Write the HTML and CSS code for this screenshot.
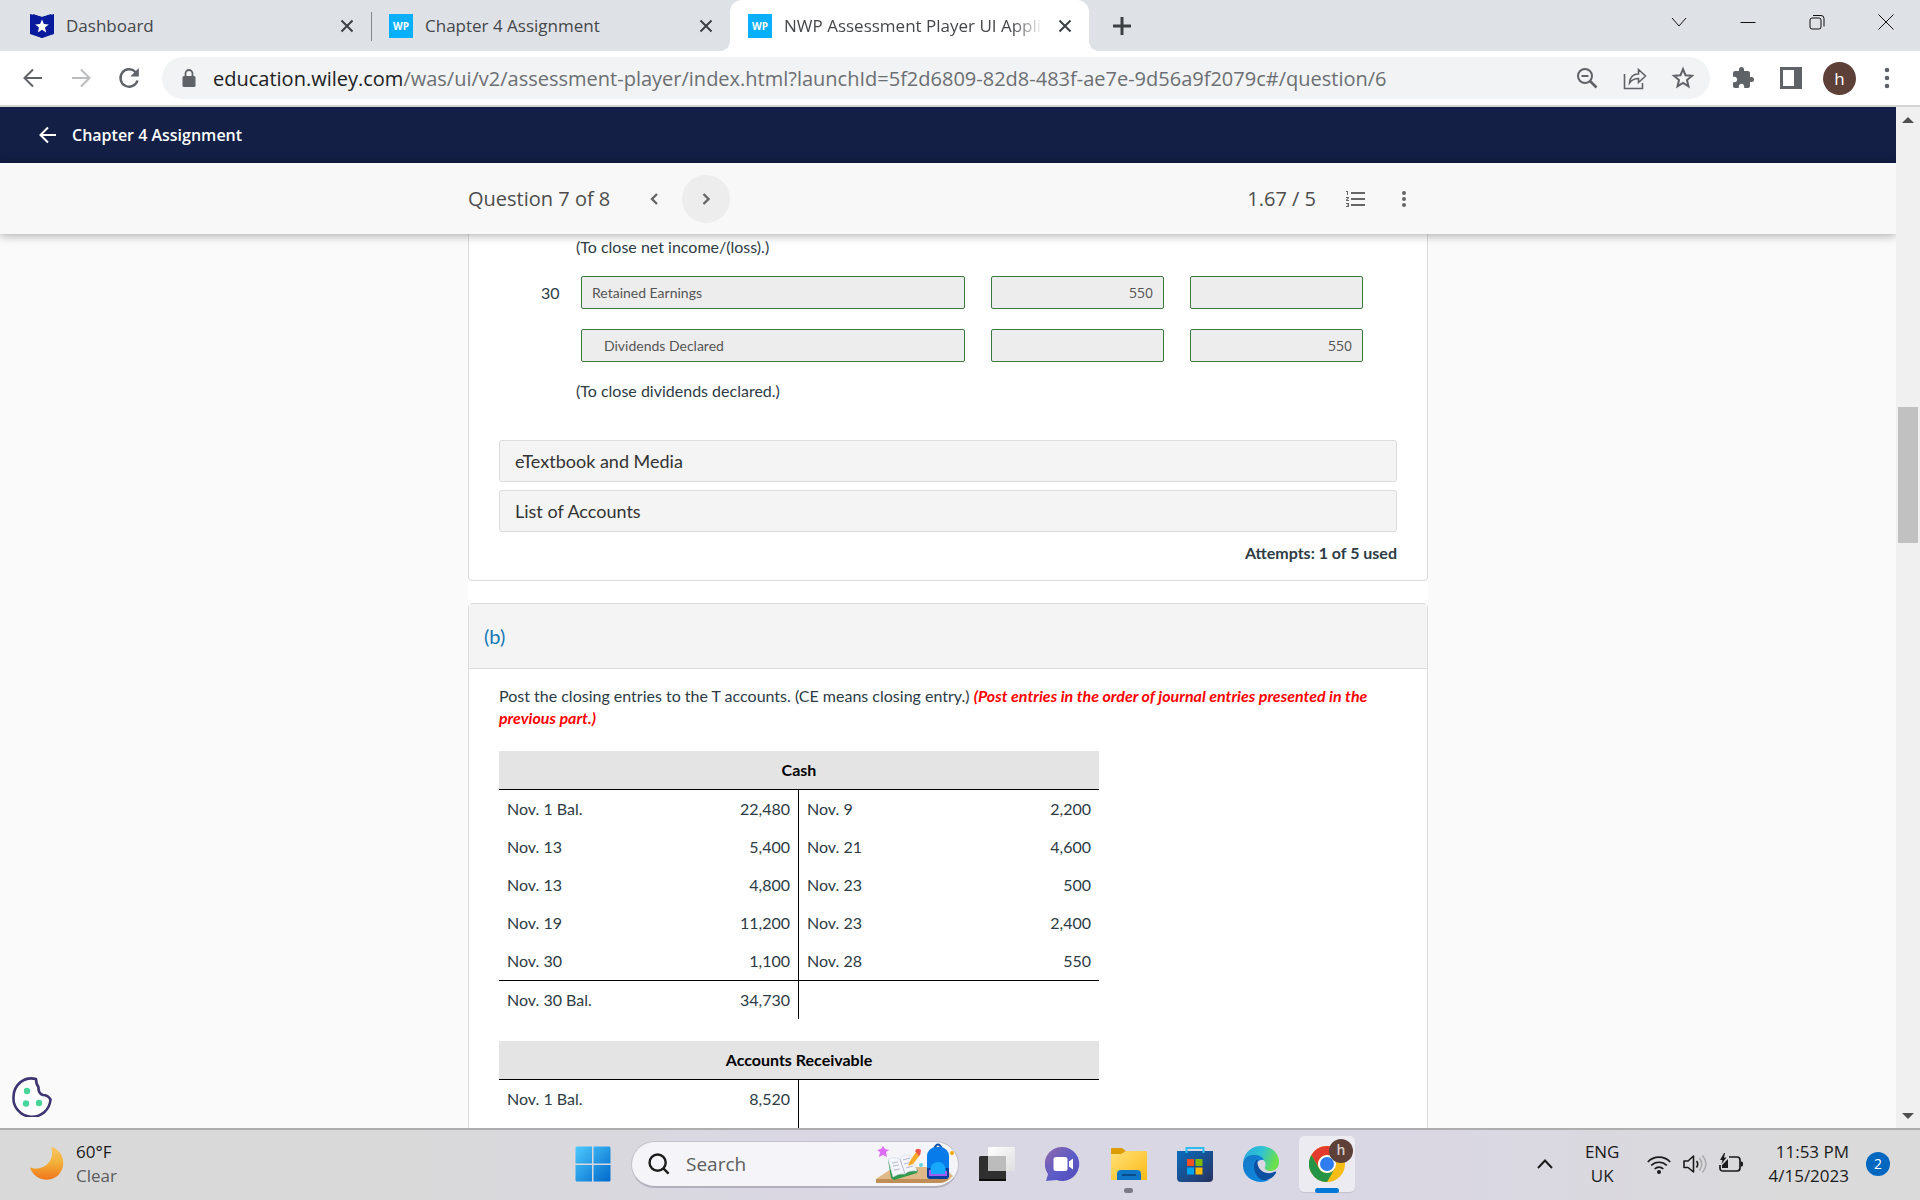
FILE: index.html
```html
<!DOCTYPE html>
<html lang="en">
<head>
  <meta charset="UTF-8">
  <meta name="viewport" content="width=device-width, initial-scale=1.0">
  <title>NWP Assessment Player UI Application</title>
  <link rel="stylesheet" href="styles.css">
</head>
<body>

  <!-- browser tabs -->
  <div class="tab-strip">
    <div class="tab">
      <svg class="favicon" viewBox="0 0 24 24"><path fill="#0a1a9c" d="M3 0l9 3 9-3v20l-9 4-9-4z"/><path fill="#0a1a9c" d="M0 0l12 3 12-3v20l-12 4-12-4z"/><path fill="#fff" d="M12 5.500l1.900 4.600 4.900.3-3.800 3.200 1.200 4.800-4.200-2.600-4.200 2.600 1.200-4.800-3.800-3.200 4.900-.3z"/></svg>
      <span class="tab-title">Dashboard</span>
      <button class="tab-close" aria-label="Close tab"><svg viewBox="0 0 14 14"><path d="M1.500 1.500l11 11M12.500 1.500l-11 11"/></svg></button>
    </div>
    <div class="tab tab-divided">
      <span class="favicon wp">WP</span>
      <span class="tab-title">Chapter 4 Assignment</span>
      <button class="tab-close" aria-label="Close tab"><svg viewBox="0 0 14 14"><path d="M1.500 1.500l11 11M12.500 1.500l-11 11"/></svg></button>
    </div>
    <div class="tab tab-active">
      <span class="favicon wp">WP</span>
      <span class="tab-title">NWP Assessment Player UI Application</span>
      <button class="tab-close" aria-label="Close tab"><svg viewBox="0 0 14 14"><path d="M1.500 1.500l11 11M12.500 1.500l-11 11"/></svg></button>
    </div>
    <button class="new-tab" aria-label="New tab"><svg viewBox="0 0 18 18"><path d="M9 0v18M0 9h18"/></svg></button>
    <div class="window-controls">
      <button aria-label="Search tabs"><svg viewBox="0 0 16 16"><path d="M1 4l7 8 7-8"/></svg></button>
      <button aria-label="Minimize"><svg viewBox="0 0 16 16"><path d="M.5 8.500h15"/></svg></button>
      <button aria-label="Restore"><svg viewBox="0 0 16 16"><rect x="1" y="4" width="11" height="11" rx="2"/><path d="M4 1.500h8q3 0 3 3v8"/></svg></button>
      <button aria-label="Close"><svg viewBox="0 0 16 16"><path d="M.5.5l15 15M15.500.5l-15 15"/></svg></button>
    </div>
  </div>

  <!-- address bar -->
  <div class="toolbar">
    <button class="nav-btn" aria-label="Back"><svg viewBox="0 0 24 24"><path fill="none" stroke="#5f6368" stroke-width="2" d="M21 12H4M12 3.500L3.500 12l8.500 8.500"/></svg></button>
    <button class="nav-btn" aria-label="Forward"><svg viewBox="0 0 24 24"><path fill="none" stroke="#babcbe" stroke-width="2" d="M3 12h17M12 3.500l8.500 8.500-8.500 8.500"/></svg></button>
    <button class="nav-btn" aria-label="Reload"><svg viewBox="0 0 24 24"><path fill="none" stroke="#5f6368" stroke-width="2.400" d="M20.500 14.500A8.700 8.700 0 1 1 18.500 6"/><path fill="#5f6368" d="M21.800 2v8.500h-8.500z"/></svg></button>
    <div class="omnibox">
      <svg class="lock" viewBox="0 0 14 18"><path fill="#5f6368" d="M2 7h10q1.500 0 1.500 1.500v8q0 1.500-1.500 1.500H2Q.5 18 .5 16.500v-8Q.5 7 2 7z"/><path fill="none" stroke="#5f6368" stroke-width="1.800" d="M3.500 8V4.500a3.500 3.500 0 0 1 7 0V8"/></svg>
      <div class="url"><span>education.wiley.com</span>/was/ui/v2/assessment-player/index.html?launchId=5f2d6809-82d8-483f-ae7e-9d56a9f2079c#/question/6</div>
      <button class="tool-btn" aria-label="Zoom"><svg viewBox="0 0 24 24"><circle cx="10" cy="10" r="7" fill="none" stroke="#5f6368" stroke-width="2"/><path fill="none" stroke="#5f6368" stroke-width="2" d="M6.500 10h7"/><path stroke="#5f6368" stroke-width="2.600" d="M15 15l6.500 6.500"/></svg></button>
      <button class="tool-btn" aria-label="Share"><svg viewBox="0 0 24 24"><path fill="none" stroke="#5f6368" stroke-width="1.600" d="M1.500 8v14.500h18V17M6.500 17c.5-6 3.500-9 9-9V3.500l7 6.500-7 6.500v-4c-4 0-6.500 1-9 4.500z"/></svg></button>
      <button class="tool-btn" aria-label="Bookmark"><svg viewBox="0 0 24 24"><path fill="none" stroke="#5f6368" stroke-width="2" d="M12 3.200l2.500 6 6.500.6-5 4.200 1.500 6.400-5.500-3.400-5.500 3.400L8 14 3 9.800l6.500-.6z"/></svg></button>
    </div>
    <button class="tool-btn" aria-label="Extensions"><svg viewBox="0 0 24 24"><path fill="#5f6368" d="M20.500 11H19V7c0-1.100-.9-2-2-2h-4V3.500a2.500 2.500 0 0 0-5 0V5H4c-1.100 0-1.990.9-1.990 2v3.800H3.500c1.490 0 2.700 1.210 2.700 2.700s-1.210 2.700-2.700 2.700H2V20c0 1.100.9 2 2 2h3.800v-1.500c0-1.490 1.210-2.700 2.700-2.700 1.490 0 2.700 1.210 2.700 2.700V22H17c1.100 0 2-.9 2-2v-4h1.500a2.500 2.500 0 0 0 0-5z"/></svg></button>
    <button class="tool-btn" aria-label="Side panel"><svg viewBox="0 0 24 24"><path fill="#5f6368" fill-rule="evenodd" d="M1 1h22v22H1zM4 4v16h11V4z"/></svg></button>
    <button class="profile" aria-label="Profile">h</button>
    <button class="tool-btn menu-btn" aria-label="Menu"><svg viewBox="0 0 24 24"><g fill="#5f6368"><circle cx="12" cy="4" r="2.300"/><circle cx="12" cy="12" r="2.300"/><circle cx="12" cy="20" r="2.300"/></g></svg></button>
  </div>

  <!-- assessment player -->
  <div class="viewport">
    <div class="page">
      <header class="app-header">
        <a class="back-link" href="#">
          <svg viewBox="0 0 18 18"><path d="M17 9H2M9 1.500L1.500 9 9 16.500"/></svg>
          Chapter 4 Assignment
        </a>
      </header>
      <div class="question-bar">
        <div class="question-bar-inner">
          <h1>Question 7 of 8</h1>
          <button class="round-btn" aria-label="Previous question"><svg viewBox="0 0 24 24"><path class="chev" d="M15 7l-5 5 5 5"/></svg></button>
          <button class="round-btn round-btn-on" aria-label="Next question"><svg viewBox="0 0 24 24"><path class="chev" d="M9.500 7l5 5-5 5"/></svg></button>
          <span class="score">1.67 / 5</span>
          <button class="round-btn" aria-label="Question list"><svg viewBox="0 0 24 24"><path fill="#666" d="M2 17h2v.5H3v1h1v.5H2v1h3v-4H2v1zm1-9h1V4H2v1h1v3zm-1 3h1.800L2 13.100v.9h3v-1H3.200L5 10.900V10H2v1zm5-6v2h14V5H7zm0 14h14v-2H7v2zm0-6h14v-2H7v2z"/></svg></button>
          <button class="round-btn" aria-label="More"><svg viewBox="0 0 24 24"><g fill="#666"><circle cx="12" cy="6" r="2"/><circle cx="12" cy="12" r="2"/><circle cx="12" cy="18" r="2"/></g></svg></button>
        </div>
      </div>

      <main class="content">
        <section class="card card-a">
          <div class="journal">
            <p class="note">(To close net income/(loss).)</p>
            <div class="journal-row">
              <span class="day">30</span>
              <input class="account" type="text" value="Retained Earnings" aria-label="Account, entry 1" readonly>
              <input class="amount" type="text" value="550" aria-label="Debit, entry 1" readonly>
              <input class="amount" type="text" value="" aria-label="Credit, entry 1" readonly>
            </div>
            <div class="journal-row">
              <span class="day"></span>
              <input class="account credit" type="text" value="Dividends Declared" aria-label="Account, entry 2" readonly>
              <input class="amount" type="text" value="" aria-label="Debit, entry 2" readonly>
              <input class="amount" type="text" value="550" aria-label="Credit, entry 2" readonly>
            </div>
            <p class="note">(To close dividends declared.)</p>
          </div>
          <button class="resource">eTextbook and Media</button>
          <button class="resource">List of Accounts</button>
          <p class="attempts">Attempts: 1 of 5 used</p>
        </section>

        <section class="card">
          <h2 class="card-title">(b)</h2>
          <div class="card-body">
            <p class="prompt">Post the closing entries to the T accounts. (CE means closing entry.) <em>(Post entries in the order of journal entries presented in the previous part.)</em></p>

            <table class="t-account">
              <thead>
                <tr><th colspan="4">Cash</th></tr>
              </thead>
              <tbody>
                <tr><td>Nov. 1 Bal.</td><td class="num debit">22,480</td><td>Nov. 9</td><td class="num">2,200</td></tr>
                <tr><td>Nov. 13</td><td class="num debit">5,400</td><td>Nov. 21</td><td class="num">4,600</td></tr>
                <tr><td>Nov. 13</td><td class="num debit">4,800</td><td>Nov. 23</td><td class="num">500</td></tr>
                <tr><td>Nov. 19</td><td class="num debit">11,200</td><td>Nov. 23</td><td class="num">2,400</td></tr>
                <tr><td>Nov. 30</td><td class="num debit">1,100</td><td>Nov. 28</td><td class="num">550</td></tr>
                <tr class="balance"><td>Nov. 30 Bal.</td><td class="num debit">34,730</td><td></td><td></td></tr>
              </tbody>
            </table>

            <table class="t-account">
              <thead>
                <tr><th colspan="4">Accounts Receivable</th></tr>
              </thead>
              <tbody>
                <tr><td>Nov. 1 Bal.</td><td class="num debit">8,520</td><td></td><td></td></tr>
                <tr><td></td><td class="num debit"></td><td></td><td></td></tr>
              </tbody>
            </table>
          </div>
        </section>
      </main>

      <button class="cookie-btn" aria-label="Cookie settings">
        <svg viewBox="0 0 40 40"><path fill="#fff" stroke="#3d3572" stroke-width="2.600" stroke-linejoin="round" d="M24 2C12 -1 1.500 8 1.500 20a18.500 18.500 0 0 0 37 2.500Q36 18 31 18 26 16.500 26.500 10 24 7 24 2z"/><g fill="#46d69a"><circle cx="15" cy="14" r="3.200"/><circle cx="14" cy="26.500" r="3.200"/><circle cx="27" cy="26" r="3.200"/></g></svg>
      </button>
    </div>
    <div class="scrollbar">
      <svg viewBox="0 0 12 6"><path fill="#505050" d="M0 6l6-6 6 6z"/></svg>
      <div class="scroll-track"><div class="scroll-thumb"></div></div>
      <svg viewBox="0 0 12 6"><path fill="#505050" d="M0 0l6 6 6-6z"/></svg>
    </div>
  </div>

  <!-- taskbar -->
  <footer class="taskbar">
    <div class="weather">
      <svg viewBox="0 0 34 34"><defs><linearGradient id="moon" x1="0" y1="0" x2="0" y2="1"><stop offset="0" stop-color="#f7c565"/><stop offset=".45" stop-color="#f2b33a"/><stop offset="1" stop-color="#f0761c"/></linearGradient></defs><path fill="url(#moon)" d="M22 0C31 3 35 12 32.500 21 28 36 7 37 .5 22 0 20 1 20.500 2 21 14 24 25 13 21.500 1.500 21 0 21.500 0 22 0z"/></svg>
      <div><div class="temp">60°F</div><div class="sky">Clear</div></div>
    </div>

    <div class="apps">
      <button class="app" aria-label="Start">
        <svg viewBox="0 0 36 36"><defs><linearGradient id="win" x1="0" y1="0" x2="1" y2="1"><stop offset="0" stop-color="#4cc9fd"/><stop offset="1" stop-color="#0069cb"/></linearGradient></defs><path fill="url(#win)" d="M2 0.500h15v17H.5V2Q.5.500 2 .5zM18.500.5H34q1.500 0 1.500 1.500v15.500h-17zM.5 19H17v16.500H2Q.5 35.500.5 34zM18.500 19h17v15q0 1.500-1.500 1.500H18.500z"/></svg>
      </button>
      <label class="search">
        <svg class="search-icon" viewBox="0 0 24 24"><circle cx="10.500" cy="10.500" r="8.800"/><path d="M17 17l5.500 5.500"/></svg>
        <input type="text" placeholder="Search" aria-label="Search">
        <svg class="search-art" viewBox="0 0 80 42">
          <path fill="#e0b988" d="M1 36l18-12h50l9 9q-5 6-12 6H1z"/><path fill="#c08f58" d="M1 36h73q-4 4-9 4H1z"/>
          <path fill="#2f9a4e" d="M13 17l3 18 3 2 23-7 1-3z"/><path fill="#f5f6fb" stroke="#d4d7e4" stroke-width=".6" d="M13 16q6-3 12 0 3-5 10-4l7 16q-8-1-12 3-6-1-12 3z"/><path fill="none" stroke="#b4b8cc" stroke-width="1" d="M25 16l5 15M17 20l6-1M18 23l6-1M19 27l6-1M28 17l7-2M29 21l8-2M31 25l7-2"/>
          <path fill="#f7a928" d="M35 18l6-9 4 3-7 9-5 2z"/><path fill="#ef5350" d="M40 8q2-4 6-1 0 4-2 6z"/>
          <path fill="none" stroke="#174ea6" stroke-width="2" d="M59 6q4-9 8 0"/><rect x="52" y="4" width="22" height="32" rx="9" fill="#087bea"/><path fill="#063f9d" d="M52 25h22v8q0 3-3 3H55q-3 0-3-3z"/><path fill="#16a9fb" d="M55 31q0-12 8-12t8 12z"/><path fill="none" stroke="#a35af0" stroke-width="2" d="M55 27v5h16v-4"/>
          <path fill="#dc6cf3" d="M8 3l2 3 4 1-3 2 1 5-4-2-4 2 1-5-3-2 4-1z"/><circle cx="46" cy="22" r="2" fill="#5bd5e6"/><circle cx="77" cy="10" r="2" fill="#f4a900"/>
        </svg>
      </label>
      <button class="app" aria-label="Task view">
        <svg viewBox="0 0 36 36"><defs><linearGradient id="tv" x1="0" y1="0" x2="1" y2="1"><stop offset="0" stop-color="#fff"/><stop offset="1" stop-color="#dedede"/></linearGradient></defs><rect y="10" width="27" height="25" rx="1.500" fill="#2f2f2f"/><path fill="#0c0c0c" d="M0 33h27v1q0 1-1 1H1q-1 0-1-1z"/><rect x="9" y="1" width="27" height="24" rx="1.500" fill="url(#tv)"/><path fill="#bcbcbc" d="M9 10h18v15H9z"/></svg>
      </button>
      <button class="app" aria-label="Chat">
        <svg viewBox="0 0 36 36"><defs><linearGradient id="chat" x1="0" y1="0" x2="1" y2="1"><stop offset="0" stop-color="#9367a8"/><stop offset=".55" stop-color="#5b5cc8"/><stop offset="1" stop-color="#5348b8"/></linearGradient></defs><path fill="url(#chat)" d="M18 1a17 17 0 1 1-6.500 33L1 35l2-7A17 17 0 0 1 18 1z"/><rect x="8.500" y="11" width="14" height="14" rx="2.500" fill="#fff"/><path fill="#fff" d="M24 15.500l4-3v11l-4-3z"/></svg>
      </button>
      <button class="app app-open" aria-label="File Explorer">
        <svg viewBox="0 0 36 36"><defs><linearGradient id="folder" x1="0" y1="0" x2="1" y2="1"><stop offset="0" stop-color="#ffe07a"/><stop offset="1" stop-color="#fbbb16"/></linearGradient></defs><path fill="#dd9d09" d="M0 3q0-1 1-1h10l5 4v4H0z"/><path fill="url(#folder)" d="M0 8h10l5-3h20q1 0 1 1v28H0z"/><path fill="#0f77c8" d="M6 34V28q0-4 4-4h16q4 0 4 4v6z"/><path stroke="#0a4a87" stroke-width="2" d="M11 29h14"/></svg>
      </button>
      <button class="app" aria-label="Microsoft Store">
        <svg viewBox="0 0 36 36"><defs><linearGradient id="store" x1="0" y1="0" x2="1" y2="1"><stop offset="0" stop-color="#0a6dbe"/><stop offset="1" stop-color="#283260"/></linearGradient></defs><path fill="url(#store)" d="M0 5h36v27q0 4-4 4H4q-4 0-4-4z"/><path fill="none" stroke="#2fbdf0" stroke-width="2" d="M9.500 7V2h17v5"/><path fill="#f25022" d="M10 13h7v7h-7z"/><path fill="#7fba00" d="M18.500 13h7v7h-7z"/><path fill="#00a4ef" d="M10 21.500h7v7h-7z"/><path fill="#ffb900" d="M18.500 21.500h7v7h-7z"/></svg>
      </button>
      <button class="app" aria-label="Edge">
        <svg viewBox="0 0 36 36"><defs><linearGradient id="e1" x1="0" y1="0" x2="1" y2=".3"><stop offset="0" stop-color="#2aa6e0"/><stop offset=".55" stop-color="#2fc3d2"/><stop offset="1" stop-color="#6be04c"/></linearGradient><linearGradient id="e2" x1="0" y1="0" x2="1" y2="1"><stop offset="0" stop-color="#1577c6"/><stop offset="1" stop-color="#0b8ce6"/></linearGradient></defs><path fill="url(#e1)" d="M0 17C1 6 9 0 18 0c11 0 18 8 18 16 0 6-4 9-9 9-4 0-6-2-5-4 2-4-1-8-5-8C10 11 3 12 0 17z"/><path fill="url(#e2)" d="M0 18C1 11 6 9 11 9c5 0 9 2 10 5-5-1-9 3-8 9 1 7 7 11 13 11C14 40-1 32 0 18z"/><path fill="#0d4fa0" d="M11 20c0-3 2-6 4-7-2 6 2 13 9 14 3 .5 6-.5 8-1.500 1 0 1.500.5 1 1.500-3 5-8 8-13 7-5-1-9-7-9-14z"/></svg>
      </button>
      <button class="app app-current" aria-label="Chrome">
        <svg viewBox="0 0 36 36"><circle cx="18" cy="18" r="18" fill="#f6bc16"/><path fill="#e33b2e" d="M2.400 9A18 18 0 0 1 33.600 9H18a9 9 0 0 0-8 13z"/><path fill="#269447" d="M2.400 9A18 18 0 0 0 18 36l7.800-13.500a9 9 0 0 1-15.600 0z"/><circle cx="18" cy="18" r="9" fill="#fff"/><circle cx="18" cy="18" r="7" fill="#2f7df0"/></svg>
        <span class="app-badge">h</span>
      </button>
    </div>

    <div class="tray">
      <svg class="tray-chevron" viewBox="0 0 16 10"><path d="M1 9l7-7.500L15 9"/></svg>
      <div class="lang">ENG<br>UK</div>
      <div class="status-icons">
        <svg viewBox="0 0 24 24"><g fill="none" stroke="#1b1b1b" stroke-width="1.700"><path d="M.8 10a15.500 15.500 0 0 1 22.400 0M4.200 13.500a11 11 0 0 1 15.600 0M7.700 17a6 6 0 0 1 8.600 0"/></g><circle cx="12" cy="20" r="2" fill="#1b1b1b"/></svg>
        <svg viewBox="0 0 24 24"><path fill="none" stroke="#1b1b1b" stroke-width="1.600" stroke-linejoin="round" d="M1 9h4l5.500-5v16L5 15.500H1zM13.500 9q2.500 3 0 6.500"/><path fill="none" stroke="#aaa" stroke-width="1.500" d="M16.500 6q4.500 6 0 12.500M19.500 3.500q7 8.500 0 17"/></svg>
        <svg viewBox="0 0 24 24"><path fill="none" stroke="#1b1b1b" stroke-width="1.700" d="M10 5h8q3 0 3 3v8q0 3-3 3H4q-3 0-3-3v-3"/><path fill="#1b1b1b" d="M21.500 9.500h1q1.500 0 1.500 1.500v2q0 1.500-1.500 1.500h-1zM5 1L1 8h2.500L2.500 12l5-6.500H5L6 1zM3 13l6-6v9H3z"/></svg>
      </div>
      <div class="clock">11:53 PM<br>4/15/2023</div>
      <span class="notif">2</span>
    </div>
  </footer>

</body>
</html>
```
FILE: styles.css
```css
* {
  box-sizing: border-box;
}

body {
  margin: 0;
  height: 100vh;
  display: flex;
  flex-direction: column;
  overflow: hidden;
  font-family: "Open Sans", sans-serif;
  background: #fff;
}

h1, h2, p {
  margin: 0;
}

button {
  display: flex;
  align-items: center;
  justify-content: center;
  padding: 0;
  border: none;
  background: none;
  font-family: inherit;
  cursor: pointer;
}

svg {
  display: block;
  flex: none;
}

/* tabs */
.tab-strip {
  display: flex;
  flex: none;
  height: 51px;
  padding-left: 12px;
  background: #dee1e6;
}

.tab {
  position: relative;
  display: flex;
  align-items: center;
  flex: 0 1 359px;
  min-width: 0;
  gap: 12px;
  padding: 0 14px 0 18px;
}

.tab-divided::before {
  content: "";
  position: absolute;
  left: 0;
  top: 12px;
  width: 1px;
  height: 29px;
  background: #85888c;
}

.tab-active {
  background: #fff;
  border-radius: 12px 12px 0 0;
}

.tab-active::before,
.tab-active::after {
  content: "";
  position: absolute;
  bottom: 0;
  width: 10px;
  height: 10px;
}

.tab-active::before {
  left: -10px;
  background: radial-gradient(circle at 0 0, #dee1e6 10px, #fff 10px);
}

.tab-active::after {
  right: -10px;
  background: radial-gradient(circle at 100% 0, #dee1e6 10px, #fff 10px);
}

.favicon {
  flex: none;
  width: 24px;
  height: 24px;
}

.wp {
  background: #08b0fc;
  color: #fff;
  font-size: 10px;
  font-weight: 700;
  line-height: 24px;
  text-align: center;
}

.tab-title {
  flex: 1;
  min-width: 0;
  overflow: hidden;
  white-space: nowrap;
  font-size: 17px;
  line-height: 24px;
  color: #45474a;
}

.tab-active .tab-title {
  -webkit-mask-image: linear-gradient(to right, #000 88%, transparent);
  mask-image: linear-gradient(to right, #000 88%, transparent);
}

.tab-close {
  flex: none;
  width: 20px;
  height: 20px;
}

.tab-close svg {
  width: 14px;
  height: 14px;
  stroke: #3c4043;
  stroke-width: 2;
}

.new-tab {
  width: 66px;
}

.new-tab svg {
  width: 18px;
  height: 18px;
  stroke: #3c4043;
  stroke-width: 3;
}

.window-controls {
  display: flex;
  height: 43px;
  margin-left: auto;
}

.window-controls button {
  width: 69px;
}

.window-controls svg {
  width: 16px;
  height: 16px;
  fill: none;
  stroke: #111;
  stroke-width: 1;
}

/* toolbar */
.toolbar {
  display: flex;
  align-items: center;
  flex: none;
  height: 56px;
  padding: 0 10px 0 9px;
  border-bottom: 2px solid #d3d3d3;
}

.nav-btn {
  width: 48px;
  height: 48px;
}

.nav-btn svg,
.tool-btn svg {
  width: 24px;
  height: 24px;
}

.omnibox {
  display: flex;
  align-items: center;
  flex: 1;
  min-width: 0;
  height: 42px;
  margin: 0 9px;
  padding: 0 3px 0 20px;
  border-radius: 21px;
  background: #f1f3f4;
}

.lock {
  width: 14px;
  height: 18px;
  margin-right: 17px;
}

.url {
  flex: 1;
  padding-top: 2px;
  overflow: hidden;
  white-space: nowrap;
  font-size: 20px;
  line-height: 28px;
  color: #6c6f73;
}

.url span {
  color: #202124;
}

.tool-btn {
  width: 48px;
  height: 42px;
}

.profile {
  width: 33px;
  height: 33px;
  margin: 0 8px;
  border-radius: 50%;
  background: #5d4037;
  color: #fff;
  font-size: 17px;
}

.toolbar .menu-btn {
  width: 46px;
}

/* page area */
.viewport {
  display: flex;
  flex: 1;
  min-height: 0;
}

.page {
  position: relative;
  flex: 1;
  overflow: hidden;
  background: #fafafa;
}

.app-header {
  display: flex;
  align-items: center;
  height: 56px;
  padding-left: 39px;
  background: #131f45;
}

.back-link {
  display: flex;
  align-items: center;
  gap: 15px;
  color: #fff;
  font-size: 16px;
  font-weight: 600;
  line-height: 24px;
  text-decoration: none;
}

.back-link svg {
  width: 18px;
  height: 18px;
  fill: none;
  stroke: #fff;
  stroke-width: 2;
}

.question-bar {
  position: relative;
  height: 71px;
  background: #f8f8f8;
  box-shadow: 0 1px 10px rgba(0, 0, 0, 0.35);
}

.question-bar-inner {
  display: flex;
  align-items: center;
  max-width: 960px;
  height: 100%;
  margin: 0 auto;
}

.question-bar h1 {
  margin-right: 20px;
  font-size: 20px;
  font-weight: 400;
  color: #4d4d4d;
}

.round-btn {
  width: 48px;
  height: 48px;
  border-radius: 50%;
}

.round-btn-on {
  margin-left: 4px;
  background: #ededed;
}

.round-btn svg {
  width: 24px;
  height: 24px;
}

.chev {
  fill: none;
  stroke: #666;
  stroke-width: 2.4;
}

.score {
  margin-left: auto;
  margin-right: 16px;
  font-size: 20px;
  color: #4d4d4d;
}

.content {
  display: flex;
  flex-direction: column;
  gap: 22px;
  max-width: 960px;
  margin: 0 auto;
  background: #fff;
  font-family: Lato, sans-serif;
  font-size: 16px;
  line-height: 22px;
  color: #2d3b45;
}

.card {
  border: 1px solid #dcdcdc;
  border-radius: 4px;
}

.card-a {
  padding: 2px 30px 16px;
  border-top: none;
  border-radius: 0 0 4px 4px;
}

.journal {
  padding: 0 34px 38px 42px;
}

.note {
  padding-left: 35px;
}

.journal-row {
  display: grid;
  grid-template-columns: 14px 384fr 173fr 173fr;
  align-items: center;
  column-gap: 26px;
  margin: 18px 0;
}

.journal-row + .journal-row {
  margin-top: 20px;
}

.account,
.amount {
  min-width: 0;
  height: 33px;
  padding: 0 10px;
  border: 1px solid #3b7a3e;
  border-radius: 2px;
  background: #ededed;
  color: #555;
  font-family: Lato, sans-serif;
  font-size: 14px;
}

.credit {
  padding-left: 22px;
}

.amount {
  text-align: right;
  font-family: "Open Sans", sans-serif;
}

.resource {
  justify-content: flex-start;
  width: 100%;
  height: 42px;
  margin-bottom: 8px;
  padding: 0 15px;
  border: 1px solid #dcdcdc;
  border-radius: 3px;
  background: #f4f4f4;
  color: #333;
  font-size: 18px;
  font-family: Lato, sans-serif;
}

.attempts {
  padding-top: 2px;
  text-align: right;
  font-weight: 700;
}

.card-title {
  padding: 20px 15px;
  border-bottom: 1px solid #dcdcdc;
  background: #f4f4f4;
  color: #1379b4;
  font-size: 20px;
  font-weight: 400;
  line-height: 24px;
}

.card-body {
  padding: 16px 30px;
}

.prompt {
  margin-bottom: 22px;
}

.prompt em {
  color: #f00;
  font-weight: 700;
}

/* T accounts */
.t-account {
  width: 600px;
  max-width: 100%;
  margin-bottom: 22px;
  border-collapse: separate;
  border-spacing: 0;
  table-layout: fixed;
}

.t-account th {
  padding: 8px;
  border-bottom: 1px solid #000;
  background: #e4e4e4;
  color: #000;
  font-weight: 700;
}

.t-account td {
  height: 38px;
  padding: 8px;
}

.t-account .num {
  text-align: right;
}

.t-account .debit {
  border-right: 1px solid #000;
}

.balance td {
  border-top: 1px solid #000;
}

.cookie-btn {
  position: absolute;
  left: 12px;
  bottom: 11px;
}

.cookie-btn svg {
  width: 40px;
  height: 40px;
}

/* scrollbar */
.scrollbar {
  display: flex;
  flex-direction: column;
  align-items: center;
  flex: none;
  width: 24px;
  padding: 10px 0 9px;
  background: #f0f0f0;
}

.scrollbar svg {
  width: 12px;
  height: 6px;
}

.scroll-track {
  flex: 1;
  padding-top: 284px;
}

.scroll-thumb {
  width: 20px;
  height: 136px;
  background: #c1c1c1;
}

/* taskbar */
.taskbar {
  display: grid;
  grid-template-columns: 1fr auto 1fr;
  flex: none;
  height: 72px;
  padding-bottom: 2px;
  border-top: 2px solid #adadb0;
  background: linear-gradient(to right, #d9d9d9 20%, #dad7e4 45%, #dad7e4 72%, #dadada 95%);
  color: #1b1b1b;
  font-size: 17px;
  line-height: 24px;
}

.weather {
  display: flex;
  align-items: center;
  gap: 12px;
  padding-left: 30px;
}

.weather svg {
  width: 34px;
  height: 34px;
}

.sky {
  color: #5c5c5c;
}

.apps {
  display: flex;
  align-items: center;
  gap: 10px;
}

.app {
  position: relative;
  width: 56px;
  height: 56px;
  border-radius: 5px;
}

.app svg {
  width: 36px;
  height: 36px;
}

.app-open::after,
.app-current::after {
  content: "";
  position: absolute;
  bottom: -1px;
  left: 23px;
  width: 9px;
  height: 5px;
  border-radius: 3px;
  background: #7d7a85;
}

.app-current {
  background: #edebf2;
  box-shadow: 0 1px 1px #c5c2cc;
}

.app-current::after {
  left: 16px;
  width: 24px;
  background: #0078d7;
}

.app-badge {
  position: absolute;
  right: 2px;
  top: 3px;
  width: 24px;
  height: 24px;
  border-radius: 50%;
  background: #5d4037;
  color: #d8cfcb;
  font-size: 14px;
  font-weight: 600;
  line-height: 22px;
}

.search {
  display: flex;
  align-items: center;
  width: 328px;
  height: 47px;
  padding: 0 3px 0 16px;
  border: 1px solid #c4c1cd;
  border-bottom: 2px solid #b3b0bc;
  border-radius: 24px;
  background: #f5f4f8;
}

.search-icon {
  width: 22px;
  height: 22px;
  fill: none;
  stroke: #1b1b1b;
  stroke-width: 2.6;
}

.search input {
  flex: 1;
  min-width: 0;
  margin-left: 16px;
  padding: 0;
  border: none;
  outline: none;
  background: none;
  font-family: "Open Sans", sans-serif;
  font-size: 19px;
}

.search input::placeholder {
  color: #5c5c5c;
}

.search-art {
  width: 80px;
  height: 42px;
}

.tray {
  display: flex;
  align-items: center;
  justify-content: flex-end;
  padding-right: 30px;
}

.tray-chevron {
  width: 16px;
  height: 10px;
  margin-right: 32px;
  fill: none;
  stroke: #1b1b1b;
  stroke-width: 2;
}

.lang {
  margin-right: 28px;
  text-align: center;
}

.status-icons {
  display: flex;
  gap: 12px;
  margin-right: 25px;
}

.status-icons svg {
  width: 24px;
  height: 24px;
}

.clock {
  text-align: right;
}

.notif {
  width: 24px;
  height: 24px;
  margin-left: 17px;
  border-radius: 50%;
  background: #0067c0;
  color: #fff;
  font-size: 14px;
  text-align: center;
}
```
